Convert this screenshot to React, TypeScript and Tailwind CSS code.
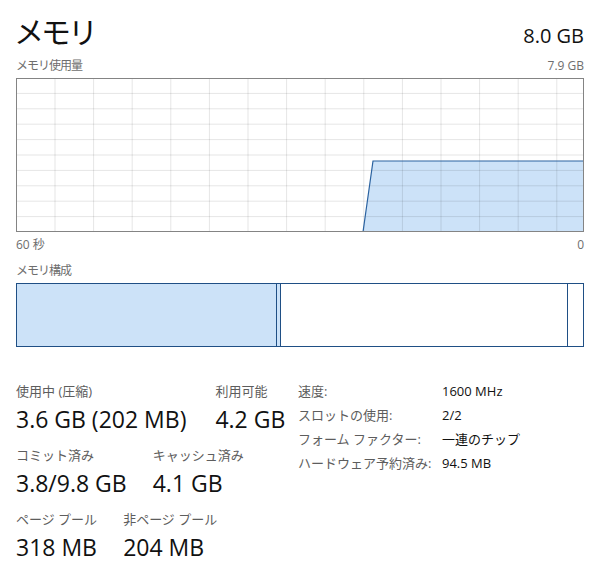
import React from 'react';

const vLines = Array.from({ length: 14 }, (_, i) => 39 + i * 38.6);
const hLines = Array.from({ length: 9 }, (_, i) => (i + 1) * 15.4);

const UsageChart = () => (
  <svg width="568" height="154" viewBox="0 0 568 154" className="block">
    <rect x="0" y="0" width="568" height="154" fill="#ffffff" />
    {/* usage area */}
    <polygon points="347,154 357,83 568,83 568,154" fill="#cce2f8" />
    {vLines.map((x) => (
      <line key={`v${x}`} x1={x} y1="0" x2={x} y2="154" stroke="rgba(0,0,0,0.1)" strokeWidth="1" />
    ))}
    {hLines.map((y) => (
      <line key={`h${y}`} x1="0" y1={y} x2="568" y2={y} stroke="rgba(0,0,0,0.1)" strokeWidth="1" />
    ))}
    <polyline points="347,154 357,83 568,83" fill="none" stroke="#2a62a0" strokeWidth="1.2" />
    <rect x="0.5" y="0.5" width="567" height="153" fill="none" stroke="#848484" strokeWidth="1" />
  </svg>
);

const Stat = ({ label, value }: { label: string; value: string }) => (
  <div className="flex flex-col">
    <span className="text-[13px] leading-[18px] text-[#5d5d5d]">{label}</span>
    <span className="text-[23px] leading-[30px] mt-[4px] text-[#111]">{value}</span>
  </div>
);

const details = [
  ['速度:', '1600 MHz'],
  ['スロットの使用:', '2/2'],
  ['フォーム ファクター:', '一連のチップ'],
  ['ハードウェア予約済み:', '94.5 MB'],
];

export default function App() {
  return (
    <div className="w-[613px] h-[588px] bg-white pl-4 pr-[29px] font-['Segoe_UI','Open_Sans','Noto_Sans_CJK_JP',sans-serif] overflow-hidden">
      {/* header */}
      <div className="flex items-end justify-between pt-[8px] h-[52px]">
        <h1 className="text-[30px] leading-[40px] text-[#111] -ml-[2px] tracking-[-3px]">メモリ</h1>
        <span className="text-[20px] leading-[28px] text-[#111] pb-[2px]">8.0 GB</span>
      </div>

      <div className="flex justify-between text-[12px] leading-[16px] text-[#6e6e6e] mt-[6px] mb-[4px]">
        <span className="tracking-[-1px]">メモリ使用量</span>
        <span>7.9 GB</span>
      </div>

      <UsageChart />

      <div className="flex justify-between text-[12px] leading-[16px] text-[#6e6e6e] mt-[5px]">
        <span>60 秒</span>
        <span>0</span>
      </div>

      <div className="text-[12px] leading-[16px] text-[#6e6e6e] mt-[10px] mb-[4px] tracking-[-1px]">メモリ構成</div>

      {/* composition bar */}
      <div className="flex h-[64px] border border-[#1f4f85]">
        <div className="w-[260px] bg-[#cce2f8] border-r border-[#1f4f85]" />
        <div className="w-[4px] bg-[#cce2f8] border-r border-[#1f4f85]" />
        <div className="flex-1 bg-white border-r border-[#1f4f85]" />
        <div className="w-[15px] bg-white" />
      </div>

      {/* stats */}
      <div className="flex mt-[35px]">
        <div className="w-[281px] flex flex-col gap-[12px]">
          <div className="flex gap-[29px]">
            <Stat label="使用中 (圧縮)" value="3.6 GB (202 MB)" />
            <Stat label="利用可能" value="4.2 GB" />
          </div>
          <div className="flex gap-[26px]">
            <Stat label="コミット済み" value="3.8/9.8 GB" />
            <Stat label="キャッシュ済み" value="4.1 GB" />
          </div>
          <div className="flex gap-[26px]">
            <Stat label="ページ プール" value="318 MB" />
            <Stat label="非ページ プール" value="204 MB" />
          </div>
        </div>
        <div className="grid grid-cols-[144px_1fr] auto-rows-[24px] text-[13px] leading-[18px] ml-[1px] h-fit">
          {details.map(([k, v]) => (
            <React.Fragment key={k}>
              <span className="text-[#5d5d5d]">{k}</span>
              <span className="text-[#111]">{v}</span>
            </React.Fragment>
          ))}
        </div>
      </div>
    </div>
  );
}
